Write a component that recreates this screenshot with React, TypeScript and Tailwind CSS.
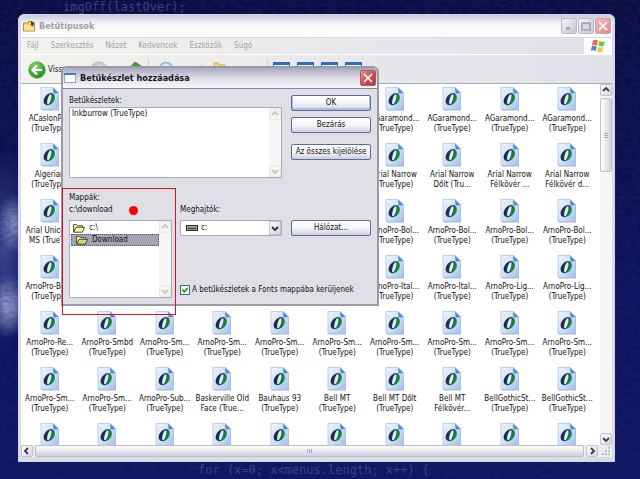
import type { ReactNode } from "react";
import clsx from "clsx";

type FontEntry = [string, string] | null;

const TT = "(TrueType)";

const fontRows: FontEntry[][] = [
  [["ACaslonPr...", TT], null, null, null, null, null, ["AGaramond...", TT], ["AGaramond...", TT], ["AGaramond...", TT], ["AGaramond...", TT]],
  [["Algerian", TT], null, null, null, null, null, ["Arial Narrow", TT], ["Arial Narrow", "Dőlt (Tru..."], ["Arial Narrow", "Félkövér ..."], ["Arial Narrow", "Félkövér d..."]],
  [["Arial Unicode", "MS (TrueT..."], null, null, null, null, null, ["ArnoPro-Bol...", TT], ["ArnoPro-Bol...", TT], ["ArnoPro-Bol...", TT], ["ArnoPro-Bol...", TT]],
  [["ArnoPro-Bol...", TT], null, null, null, null, null, ["ArnoPro-Ital...", TT], ["ArnoPro-Ital...", TT], ["ArnoPro-Lig...", TT], ["ArnoPro-Lig...", TT]],
  [["ArnoPro-Re...", TT], ["ArnoPro-Smbd", TT], ["ArnoPro-Sm...", TT], ["ArnoPro-Sm...", TT], ["ArnoPro-Sm...", TT], ["ArnoPro-Sm...", TT], ["ArnoPro-Sm...", TT], ["ArnoPro-Sm...", TT], ["ArnoPro-Sm...", TT], ["ArnoPro-Sm...", TT]],
  [["ArnoPro-Sm...", TT], ["ArnoPro-Sm...", TT], ["ArnoPro-Sub...", TT], ["Baskerville Old", "Face (True..."], ["Bauhaus 93", TT], ["Bell MT", TT], ["Bell MT Dőlt", TT], ["Bell MT", "Félkövér..."], ["BellGothicSt...", TT], ["BellGothicSt...", TT]],
  [["", ""], ["", ""], ["", ""], ["", ""], ["", ""], ["", ""], ["", ""], ["", ""], ["", ""], ["", ""]]
];

const menus = ["Fájl", "Szerkesztés", "Nézet", "Kedvencek", "Eszközök", "Súgó"];

function Defs() {
  return (
    <svg className="absolute h-0 w-0" aria-hidden="true">
      <defs>
        <linearGradient id="page" x1="0" y1="0" x2="1" y2="1">
          <stop offset="0" stopColor="#eef5ff" />
          <stop offset="0.5" stopColor="#cfe0fb" />
          <stop offset="1" stopColor="#a3c0f0" />
        </linearGradient>
        <linearGradient id="ring" x1="0" y1="0" x2="1" y2="0">
          <stop offset="0" stopColor="#1c2450" />
          <stop offset="0.45" stopColor="#14403c" />
          <stop offset="1" stopColor="#1ba03a" />
        </linearGradient>
        <radialGradient id="back" cx="0.4" cy="0.3" r="0.8">
          <stop offset="0" stopColor="#8fd67c" />
          <stop offset="0.6" stopColor="#3fa535" />
          <stop offset="1" stopColor="#1f7a1c" />
        </radialGradient>
      </defs>
    </svg>
  );
}

function FontIcon() {
  return (
    <svg className="h-6 w-5" viewBox="0 0 20 24" aria-hidden="true">
      <path d="M2 2h12l5 5v16.500H2z" fill="#8794b8" opacity="0.7" />
      <path d="M1 .5h12.500l5 5v17H1z" fill="url(#page)" stroke="#a9bfe2" strokeWidth="0.7" />
      <path d="M13 .7l5.300 5.300-4.600.5z" fill="#4f82d6" />
      <g transform="translate(9.300 12.200) skewX(-16)">
        <ellipse rx="5.400" ry="6.100" fill="url(#ring)" />
        <ellipse rx="1.700" ry="5" fill="#dce9fc" />
      </g>
    </svg>
  );
}

function Chevron({ dir, className }: { dir: "up" | "down" | "left" | "right"; className?: string }) {
  const paths = {
    up: "M2 6l3-3 3 3",
    down: "M2 4l3 3 3-3",
    left: "M6 2L3 5l3 3",
    right: "M4 2l3 3-3 3"
  };
  return (
    <svg className={clsx("h-2.5 w-2.5", className)} viewBox="0 0 10 10" fill="none" stroke="currentColor" strokeWidth="1.8" aria-hidden="true">
      <path d={paths[dir]} />
    </svg>
  );
}

function ScrollButton({ dir, label, faded }: { dir: "up" | "down" | "left" | "right"; label: string; faded?: boolean }) {
  return (
    <button
      type="button"
      aria-label={label}
      className={clsx(
        "flex size-3 shrink-0 items-center justify-center rounded-xs border",
        faded ? "border-[#ebebe6] bg-[#f3f3ee] text-[#c8c8bc]" : "border-[#c2c2cf] bg-linear-to-br from-white to-[#d5d5e0] text-[#3c3c44]"
      )}
    >
      <Chevron dir={dir} />
    </button>
  );
}

function ListScroll() {
  return (
    <div className="flex w-3 shrink-0 flex-col justify-between bg-[#f6f6f9]">
      <ScrollButton dir="up" label="Fel" faded />
      <ScrollButton dir="down" label="Le" faded />
    </div>
  );
}

function CaptionButton({ label, red, strong, children }: { label: string; red?: boolean; strong?: boolean; children: ReactNode }) {
  return (
    <button
      type="button"
      aria-label={label}
      className={clsx(
        "flex size-4 items-center justify-center rounded-xs border",
        strong && "border-[#a8566a] bg-linear-to-br from-[#dd9a96] via-[#cc5450] to-[#b03a40] text-white",
        red && "border-[#d3a2a8] bg-linear-to-br from-[#efb9b9] to-[#dc8a8a] text-white",
        !red && !strong && "border-[#b9b9c9] bg-linear-to-br from-[#f4f4f8] to-[#c6c6d4] text-[#a3a3b3]"
      )}
    >
      <svg className="size-3.5" viewBox="0 0 14 14" fill="none" stroke="currentColor" strokeWidth="1.6" aria-hidden="true">
        {children}
      </svg>
    </button>
  );
}

function DialogButton({ focused, children }: { focused?: boolean; children: ReactNode }) {
  return (
    <button
      type="button"
      className={clsx(
        "flex h-4 w-full items-center justify-center whitespace-nowrap rounded-xs border border-[#5a6d96] bg-linear-to-b from-white via-[#f6f6fa] to-[#cfcfdd]",
        focused && "shadow-[inset_0_-1px_0_1px_#a9bfe8]"
      )}
    >
      {children}
    </button>
  );
}

function FolderIcon({ open }: { open?: boolean }) {
  return (
    <svg className="h-2.5 w-3 shrink-0" viewBox="0 0 12 10" aria-hidden="true">
      <path d="M.500 9V1.500h3l1 1.200H9.500V4.500" fill="#fbf6a0" stroke="#4b4a20" strokeWidth="0.9" />
      <path d="M.700 9.200L3 4.300h8.600L9.300 9.200z" fill={open ? "#d9d47a" : "#fdf9b5"} stroke="#3c3b18" strokeWidth="0.9" />
    </svg>
  );
}

function Toolbar() {
  return (
    <div className="flex h-[29px] items-center gap-1 border-b border-[#9bb0b8] pt-0.5 pl-[7px]">
      <button type="button" className="flex w-[58px] items-center gap-0.5">
        <svg className="h-[18px] w-[18px]" viewBox="0 0 18 18" aria-hidden="true">
          <circle cx="9" cy="9" r="8.300" fill="url(#back)" stroke="#4e9a45" strokeWidth="0.6" />
          <path d="M14 9H5M9 4.500L4.500 9 9 13.500" fill="none" stroke="#fff" strokeWidth="2.200" />
        </svg>
        Vissza
      </button>
      <svg className="h-[18px] w-[18px]" viewBox="0 0 18 18" aria-hidden="true">
        <circle cx="9" cy="9" r="8.300" fill="#c9c9cc" stroke="#b5b5ba" strokeWidth="0.6" />
        <path d="M4 9h9M9 4.500L13.500 9 9 13.500" fill="none" stroke="#fff" strokeWidth="2" />
      </svg>
      <svg className="ml-4 h-[18px] w-4" viewBox="0 0 16 18" aria-hidden="true">
        <path d="M2 8h13v9H2z" fill="#f2d879" />
        <path d="M7 1l8 5-3 1v7H6V8L1 7z" fill="#37a037" stroke="#24762a" strokeWidth="0.6" />
      </svg>
      <span className="h-5 w-px bg-[#c9c9cf]" />
      <svg className="ml-1 h-[18px] w-[18px]" viewBox="0 0 18 18" aria-hidden="true">
        <circle cx="9" cy="8" r="6.500" fill="#d3ebfa" stroke="#8fb7d8" strokeWidth="1.500" />
      </svg>
      <span className="w-7 shrink-0 pt-0.5">Keresés</span>
      <svg className="h-[18px] w-4" viewBox="0 0 16 18" aria-hidden="true">
        <path d="M3 2h4l1 2h6v9H3z" fill="#f7dc83" stroke="#d9ab3a" />
      </svg>
      <span className="w-8 shrink-0 pt-0.5">Mappák</span>
      <span className="h-5 w-px bg-[#c9c9cf]" />
      <div className="ml-px flex gap-[7px]">
        {["miniatűr", "mozaik", "ikonok", "lista"].map((view) => (
          <svg key={view} className="h-4 w-[17px]" viewBox="0 0 17 16" aria-hidden="true">
            <rect x="0.500" y="0.500" width="16" height="15" rx="1" fill="#e8f1fb" stroke="#3a77b4" />
            <path d="M0 1.500h17" stroke="#2c6fb3" strokeWidth="3" />
          </svg>
        ))}
      </div>
    </div>
  );
}

function Explorer() {
  return (
    <section className="flex min-h-0 flex-1 flex-col rounded-t-md border border-[#d6d6e4] bg-[#dcdce8] px-0.5 pb-1">
      <header className="flex h-[22px] shrink-0 items-center gap-1 rounded-t-md bg-linear-to-b from-[#c9c9da] via-[#f5f5fa] via-40% to-white pr-px pl-0.5">
        <svg className="h-3 w-3" viewBox="0 0 12 12" aria-hidden="true">
          <path d="M.500 3h4l1-1.500h3V3h3v8H.500z" fill="#f4cc5c" stroke="#a5762a" strokeWidth="0.8" />
          <path d="M1 5h10v5.500H1z" fill="#fae28e" />
          <path d="M8 1l3 1.500-1 4-2-1z" fill="#4d4433" />
        </svg>
        <h1 className="flex-1 text-[9px] leading-3 font-bold text-[#a0a0a8]">Betűtípusok</h1>
        <div className="flex gap-px">
          <CaptionButton label="Kis méret"><path d="M4 9.500h4" strokeWidth="2.500" /></CaptionButton>
          <CaptionButton label="Teljes méret"><path d="M3 4h8v7H3zM3 4.500h8" /></CaptionButton>
          <CaptionButton label="Bezárás" red><path d="M3 3l8 8M11 3l-8 8" /></CaptionButton>
        </div>
      </header>
      <div className="shrink-0 bg-linear-to-r from-[#f2f2ee] to-[#e1e1ea]">
        <nav className="flex h-[18px] items-center justify-between border-y border-y-[#d8d8df] border-b-white text-[#a3a3a6]">
          <ul className="flex gap-3 pl-1.5">
            {menus.map((item) => (
              <li key={item}><button type="button">{item}</button></li>
            ))}
          </ul>
          <div className="flex h-4 w-7 items-center justify-center bg-white">
            <svg className="h-3.5 w-4" viewBox="0 0 16 14" aria-hidden="true">
              <path d="M3 1.500q2.500-1.500 5 0L7 6.500q-2.500-1.200-5 0z" fill="#e8703c" />
              <path d="M9 2q2.500 1.500 6 .3L13.500 7q-2.500 1-5-.2z" fill="#7ebc4c" />
              <path d="M1.800 7.300q2.500-1.200 5 .200L5.800 12q-2.500-1.400-5 0z" fill="#4b86d4" />
              <path d="M8.200 7.800q2.500 1.200 5 .200L12 13q-2.500 1-5-.4z" fill="#f3c83c" />
            </svg>
          </div>
        </nav>
        <Toolbar />
      </div>
      <div className="flex min-h-0 flex-1 bg-white">
        <ul className="grid flex-1 auto-rows-[56px] grid-cols-10 overflow-hidden pt-[3px] pr-1">
          {fontRows.flat().map((font, i) => (
            <li key={i} className="flex min-w-0 flex-col items-center whitespace-nowrap">
              {font && (
                <>
                  <FontIcon />
                  <span className="mt-[3px]">{font[0]}</span>
                  <span>{font[1]}</span>
                </>
              )}
            </li>
          ))}
        </ul>
        <div className="flex w-3 flex-col bg-[#f5f5fa]">
          <ScrollButton dir="up" label="Görgetés fel" />
          <div className="mt-0.5 flex h-[74px] flex-col items-center justify-center gap-px rounded-xs border border-[#bcbccb] bg-linear-to-r from-white to-[#d3d3df]">
            <span className="h-px w-1 bg-[#a8a8b8]" />
            <span className="h-px w-1 bg-[#a8a8b8]" />
            <span className="h-px w-1 bg-[#a8a8b8]" />
          </div>
          <span className="flex-1" />
          <ScrollButton dir="down" label="Görgetés le" />
        </div>
      </div>
      <div className="flex h-3 shrink-0 gap-0.5 bg-[#ececf2]">
        <ScrollButton dir="left" label="Görgetés balra" />
        <div className="flex flex-1 items-center justify-center gap-px rounded-xs border border-[#bcbccb] bg-linear-to-b from-white to-[#d0d0dc]">
          <span className="h-1 w-px bg-[#a8a8b8]" />
          <span className="h-1 w-px bg-[#a8a8b8]" />
          <span className="h-1 w-px bg-[#a8a8b8]" />
        </div>
        <ScrollButton dir="right" label="Görgetés jobbra" />
        <svg className="size-3" viewBox="0 0 12 12" fill="#c0c0c8" aria-hidden="true">
          <path d="M8 2h2v2H8zM8 5h2v2H8zM5 5h2v2H5zM8 8h2v2H8zM5 8h2v2H5zM2 8h2v2H2z" />
        </svg>
      </div>
    </section>
  );
}

function AddFontDialog() {
  return (
    <section
      role="dialog"
      aria-labelledby="dialog-title"
      className="absolute top-[66px] left-[61px] w-[318px] rounded-t-md border-2 border-[#9a9aab] bg-[#e0dfe5]"
    >
      <header className="flex h-5 items-center gap-1 rounded-t-sm bg-linear-to-b from-[#a9a9be] via-[#dcdce6] to-[#f8f8fb] px-px">
        <svg className="h-2.5 w-3" viewBox="0 0 12 10" aria-hidden="true">
          <rect x="0.500" y="0.500" width="11" height="9" fill="#fff" stroke="#8fa6c4" />
          <path d="M0 1h12" stroke="#3f7fd0" strokeWidth="2" />
        </svg>
        <h2 id="dialog-title" className="flex-1 text-[9px] leading-3 font-bold text-[#15151c]">Betűkészlet hozzáadása</h2>
        <CaptionButton label="Bezárás" strong><path d="M3 3l8 8M11 3l-8 8" /></CaptionButton>
      </header>
      <div className="border-t border-[#85859a] p-1.5">
        <div className="flex gap-[9px]">
          <div className="flex-1">
            <p id="fonts-label" className="leading-3">Betűkészletek:</p>
            <div className="flex h-[71px] border border-[#9dafc2] bg-white">
              <ul role="listbox" aria-labelledby="fonts-label" className="flex-1 px-0.5">
                <li role="option" aria-selected="false" className="leading-3">Inkburrow (TrueType)</li>
              </ul>
              <ListScroll />
            </div>
          </div>
          <div className="flex w-20 flex-col gap-1.5">
            <DialogButton focused>OK</DialogButton>
            <DialogButton>Bezárás</DialogButton>
            <div className="pt-[5px]">
              <DialogButton>Az összes kijelölése</DialogButton>
            </div>
          </div>
        </div>
        <div className="flex gap-2 pt-[14px]">
          <div className="w-[103px]">
            <p id="folders-label" className="leading-3">Mappák:</p>
            <p className="flex items-center gap-4 pb-1 leading-3">
              c:\download
              <span className="size-[9px] rounded-full bg-[#fb0007]" />
            </p>
            <div className="flex h-[78px] border border-[#9dafc2] bg-white">
              <ul role="listbox" aria-labelledby="folders-label" className="flex-1 pt-px pl-px">
                <li role="option" aria-selected="false" className="flex h-3 items-center gap-1 pl-0.5"><FolderIcon />c:\</li>
                <li role="option" aria-selected="true" className="flex h-3 items-center gap-1 border border-dotted border-[#55556a] bg-[#a3a3b5] pl-1"><FolderIcon open />Download</li>
              </ul>
              <ListScroll />
            </div>
          </div>
          <div className="flex flex-1 flex-col justify-between pt-3">
            <div>
              <label htmlFor="drive" className="block leading-3">Meghajtók:</label>
              <div className="flex gap-[9px] pt-1">
                <div className="relative flex-1">
                  <select id="drive" className="block h-4 w-full appearance-none border border-[#9dafc2] bg-white pl-5">
                    <option>c:</option>
                  </select>
                  <svg className="pointer-events-none absolute top-[5px] left-1.5 h-1.5 w-3" viewBox="0 0 12 6" aria-hidden="true">
                    <rect x="0.500" y="0.500" width="11" height="5" fill="#9a9a8c" stroke="#2f2f2c" />
                    <path d="M2 3.500h8" stroke="#3c3c38" />
                  </svg>
                  <span className="pointer-events-none absolute top-px right-px flex h-3.5 w-3 items-center justify-center border border-[#c3c3d2] bg-linear-to-br from-white to-[#cfcfdd] text-[#30303a]">
                    <Chevron dir="down" />
                  </span>
                </div>
                <div className="w-20"><DialogButton>Hálózat...</DialogButton></div>
              </div>
            </div>
            <label className="flex items-center gap-0.5 pb-0.5 leading-3">
              <span className="relative size-2.5">
                <input type="checkbox" defaultChecked className="block size-2.5 appearance-none border border-[#3d6287] bg-white" />
                <svg className="pointer-events-none absolute inset-0 size-2.5" viewBox="0 0 10 10" aria-hidden="true">
                  <path d="M2.300 4.600L4.300 6.800 7.800 2.800" fill="none" stroke="#2ba32b" strokeWidth="1.800" />
                </svg>
              </span>
              A betűkészletek a Fonts mappába kerüljenek
            </label>
          </div>
        </div>
      </div>
    </section>
  );
}

export default function App() {
  return (
    <main className="relative flex h-screen flex-col overflow-hidden bg-[radial-gradient(ellipse_16px_30px_at_13px_224px,#8f98d0,transparent),radial-gradient(ellipse_20px_32px_at_8px_306px,#a5acdc,transparent),radial-gradient(ellipse_30px_100px_at_4px_250px,#3d4a96,transparent),linear-gradient(#090d44,#0a1260_60%,#0b1768)] font-['DejaVu_Sans_Condensed',sans-serif] text-[8px] leading-[10px] text-[#111]">
      <svg className="absolute inset-0 h-full w-full opacity-30" aria-hidden="true">
        <filter id="grain">
          <feTurbulence type="fractalNoise" baseFrequency="0.16 0.28" numOctaves="3" seed="4" />
          <feColorMatrix values="0 0 0 0 0.02  0 0 0 0 0.02  0 0 0 0 0.1  2.500 0 0 0 -0.7" />
        </filter>
        <rect width="100%" height="100%" filter="url(#grain)" />
      </svg>
      <Defs />
      <p className="relative h-[14px] shrink-0 pl-[63px] font-['DejaVu_Sans_Mono',monospace] text-xs leading-[14px] text-[#3a4278]">imgOff(lastOver);</p>
      <div className="relative flex min-h-0 flex-1 pr-[25px] pl-[18px]">
        <Explorer />
      </div>
      <p className="relative h-[17px] shrink-0 pl-[198px] font-['DejaVu_Sans_Mono',monospace] text-xs leading-[17px] text-[#35428c]">{"for (x=0; x<menus.length; x++) {"}</p>
      <AddFontDialog />
      <div className="pointer-events-none absolute top-[188px] left-[62px] h-[127px] w-[114px] border border-[#dd1120]" />
    </main>
  );
}
